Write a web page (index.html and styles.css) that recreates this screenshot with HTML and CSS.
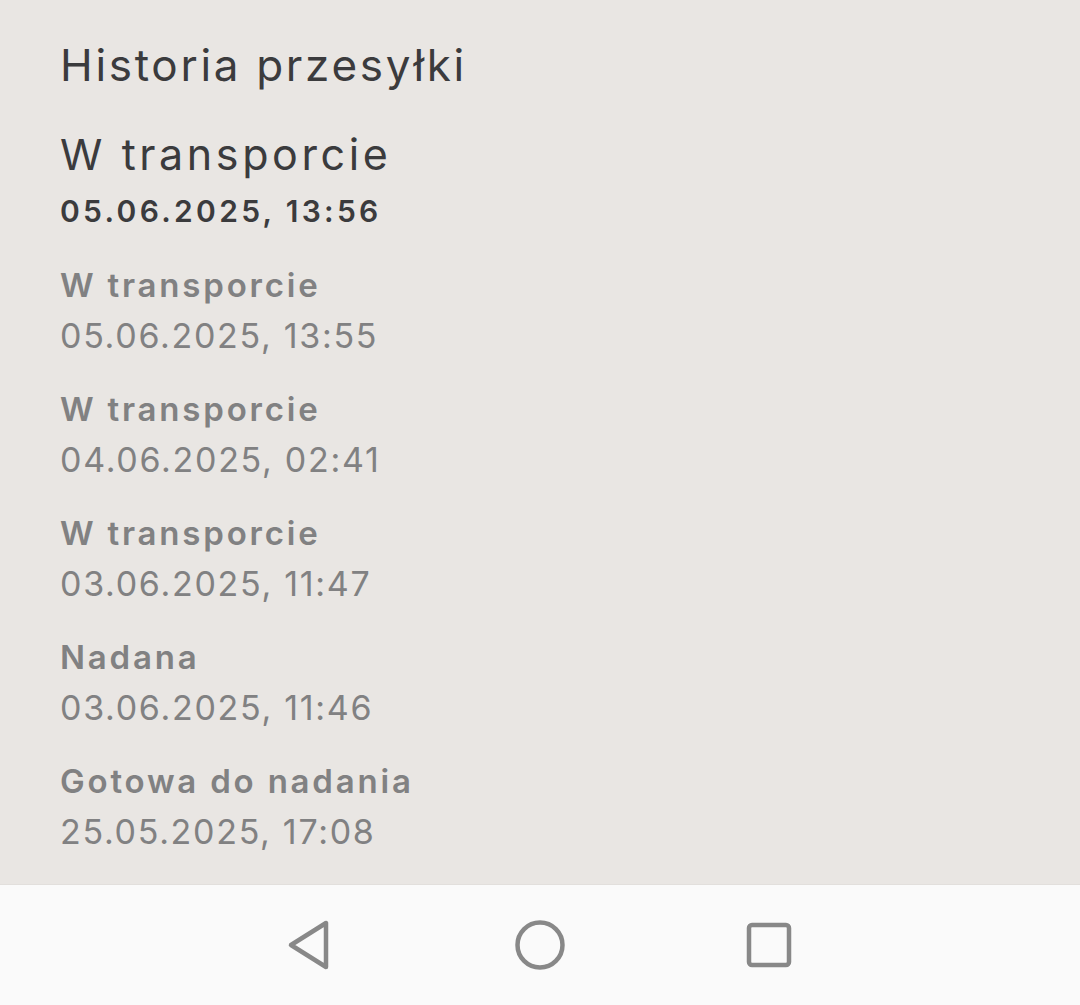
FILE: index.html
```html
<!DOCTYPE html>
<html lang="pl">
<head>
    <meta charset="UTF-8">
    <meta name="viewport" content="width=device-width, initial-scale=1.0">
    <title>Historia przesyłki</title>
    <link rel="stylesheet" href="styles.css">
</head>
<body>
    <div class="screen">
        <div class="history">
            <h1 class="history-title">Historia przesyłki</h1>

            <div class="current">
                <div class="current-status">W transporcie</div>
                <div class="current-date">05.06.2025, 13:56</div>
            </div>

            <ul class="event-list">
                <li class="event">
                    <div class="event-status">W transporcie</div>
                    <div class="event-date">05.06.2025, 13:55</div>
                </li>
                <li class="event">
                    <div class="event-status">W transporcie</div>
                    <div class="event-date">04.06.2025, 02:41</div>
                </li>
                <li class="event">
                    <div class="event-status">W transporcie</div>
                    <div class="event-date">03.06.2025, 11:47</div>
                </li>
                <li class="event">
                    <div class="event-status">Nadana</div>
                    <div class="event-date">03.06.2025, 11:46</div>
                </li>
                <li class="event">
                    <div class="event-status">Gotowa do nadania</div>
                    <div class="event-date">25.05.2025, 17:08</div>
                </li>
            </ul>
        </div>

        <!-- pasek nawigacji systemowej -->
        <nav class="nav-bar">
            <div class="nav-btn">
                <svg width="60" height="60" viewBox="0 0 60 60">
                    <path d="M46 8 L46 52 L11 30 Z" fill="none" stroke="#888" stroke-width="4.5" stroke-linejoin="round"/>
                </svg>
            </div>
            <div class="nav-btn">
                <svg width="60" height="60" viewBox="0 0 60 60">
                    <circle cx="30" cy="30" r="22.5" fill="none" stroke="#888" stroke-width="4.5"/>
                </svg>
            </div>
            <div class="nav-btn">
                <svg width="60" height="60" viewBox="0 0 60 60">
                    <rect x="9" y="10" width="40" height="40" rx="3" fill="none" stroke="#888" stroke-width="4.5"/>
                </svg>
            </div>
        </nav>
    </div>
</body>
</html>
```

FILE: styles.css
```css
* {
    margin: 0;
    padding: 0;
    box-sizing: border-box;
}

body {
    font-family: Inter, "Open Sans", "DejaVu Sans", sans-serif;
    background: #e9e6e3;
}

.screen {
    height: 1005px;
    display: flex;
    flex-direction: column;
}

.history {
    flex: 1;
    padding: 37px 0 0 60px;
    overflow: hidden;
}

.history-title {
    font-size: 44px;
    font-weight: 400;
    line-height: 56px;
    color: #3b3b3d;
    letter-spacing: 2.7px;
}

.current {
    margin-top: 33px;
}

.current-status {
    font-size: 43px;
    font-weight: 400;
    line-height: 56px;
    color: #3b3b3d;
    letter-spacing: 3.6px;
}

.current-date {
    margin-top: 9px;
    font-size: 30px;
    font-weight: 600;
    line-height: 40px;
    color: #3b3b3d;
    letter-spacing: 3.3px;
}

.event-list {
    list-style: none;
    margin-top: 32px;
    display: flex;
    flex-direction: column;
    gap: 29px;
}

.event-status {
    font-size: 33px;
    font-weight: 600;
    line-height: 44px;
    color: #818182;
    letter-spacing: 2.8px;
}

.event-date {
    margin-top: 7px;
    font-size: 34px;
    font-weight: 400;
    line-height: 44px;
    color: #818182;
    letter-spacing: 1.7px;
}

.nav-bar {
    height: 121px;
    background: #fafafa;
    border-top: 1px solid #e2dfdc;
    display: flex;
    align-items: center;
    justify-content: center;
    gap: 170px;
}

.nav-btn {
    width: 60px;
    height: 60px;
    display: flex;
    align-items: center;
    justify-content: center;
}
```
